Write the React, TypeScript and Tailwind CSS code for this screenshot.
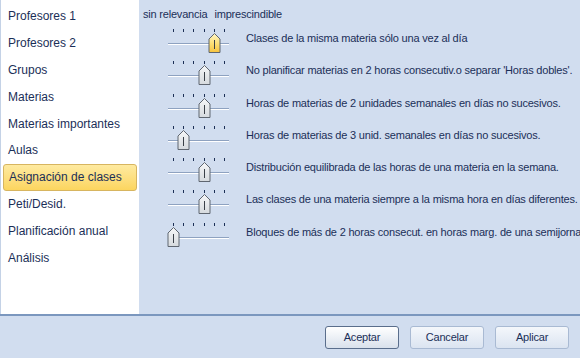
import React from 'react';

const menu = [
  'Profesores 1',
  'Profesores 2',
  'Grupos',
  'Materias',
  'Materias importantes',
  'Aulas',
  'Asignación de clases',
  'Peti/Desid.',
  'Planificación anual',
  'Análisis',
];

const rules = [
  { text: 'Clases de la misma materia sólo una vez al día', pos: 4, active: true },
  { text: "No planificar materias en 2 horas consecutiv.o separar 'Horas dobles'.", pos: 3 },
  { text: 'Horas de materias de 2 unidades semanales en días no sucesivos.', pos: 3 },
  { text: 'Horas de materias de 3 unid. semanales en días no sucesivos.', pos: 1 },
  { text: 'Distribución equilibrada de las horas de una materia en la semana.', pos: 3 },
  { text: 'Las clases de una materia siempre a la misma hora en días diferentes.', pos: 3 },
  { text: 'Bloques de más de 2 horas consecut. en horas marg. de una semijornada', pos: 0 },
];

const ticks = [11.5, 21.5, 31.5, 42.5, 52.5, 62.5];

function Slider({ pos, active }: { pos: number; active?: boolean }) {
  const cx = ticks[pos];
  const l = cx - 5.5;
  const r = cx + 5.5;
  const id = active ? 'thumbY' : 'thumbG';
  return (
    <svg width="70" height="30" className="shrink-0">
      <defs>
        <linearGradient id="thumbY" x1="0" y1="0" x2="0" y2="1">
          <stop offset="0" stopColor="#fff6c8" />
          <stop offset="0.5" stopColor="#fde17a" />
          <stop offset="1" stopColor="#f7c33e" />
        </linearGradient>
        <linearGradient id="thumbG" x1="0" y1="0" x2="0" y2="1">
          <stop offset="0" stopColor="#f6f7f8" />
          <stop offset="1" stopColor="#d6dade" />
        </linearGradient>
      </defs>
      {ticks.map((t) => (
        <rect key={t} x={t - 0.5} y={4} width={1} height={3} fill="#1c2f55" />
      ))}
      <rect x={6} y={18} width={61} height={1} fill="#8ea2c0" />
      <rect x={6} y={19} width={61} height={1} fill="#ffffff" />
      <polygon
        points={`${l},27.5 ${l},14 ${cx},8.5 ${r},14 ${r},27.5`}
        fill={`url(#${id})`}
        stroke="#5f6670"
        strokeWidth="1"
      />
      <rect x={cx - 0.5} y={15} width={1} height={9} fill="#3a4048" />
    </svg>
  );
}

export default function App() {
  return (
    <div
      className="w-[580px] h-[358px] bg-[#d1ddef] flex flex-col overflow-hidden text-[#1b2f58]"
      style={{ fontFamily: '"Liberation Sans", Arial, sans-serif' }}
    >
      <div className="flex h-[314px]">
        <div className="w-[139px] shrink-0 bg-white border-l border-[#c4d2e6] pt-[3px] px-[2px]">
          {menu.map((m) => (
            <div
              key={m}
              className={`h-[26.8px] flex items-center pl-[5px] text-[12px] ${
                m === 'Asignación de clases'
                  ? 'rounded-[3px] border border-[#d7b560] bg-gradient-to-b from-[#feeaa0] to-[#fcd55e] pl-[4px]'
                  : ''
              }`}
            >
              {m}
            </div>
          ))}
        </div>
        <div className="flex-1 min-w-0 pl-[4px] pt-[7px]">
          <div className="flex text-[11px] leading-[14px] tracking-[-0.2px]">
            <span>sin relevancia</span>
            <span className="ml-[7px]">imprescindible</span>
          </div>
          <div className="mt-[4px] flex flex-col">
            {rules.map((r) => (
              <div key={r.text} className="flex h-[32.3px] items-start pl-[19px]">
                <Slider pos={r.pos} active={r.active} />
                <span className="ml-[14px] mt-[6px] whitespace-nowrap text-[11px] leading-[14px] tracking-[-0.2px]">
                  {r.text}
                </span>
              </div>
            ))}
          </div>
        </div>
      </div>
      <div className="h-[2px] bg-[#7b97be]" />
      <div className="flex justify-end gap-[11px] pr-[11px] pt-[10px] text-[11px] tracking-[-0.2px]">
        <button className="w-[74px] h-[23px] rounded-[3px] border border-[#5a6e8c] bg-gradient-to-b from-[#ffffff] to-[#d9e1ec] text-[#1b2f58]">
          Aceptar
        </button>
        <button className="w-[74px] h-[23px] rounded-[3px] border border-[#a9bad3] bg-gradient-to-b from-[#f4f7fb] to-[#dbe4f1] text-[#1b2f58]">
          Cancelar
        </button>
        <button className="w-[74px] h-[23px] rounded-[3px] border border-[#a9bad3] bg-gradient-to-b from-[#f4f7fb] to-[#dbe4f1] text-[#1b2f58]">
          Aplicar
        </button>
      </div>
    </div>
  );
}
